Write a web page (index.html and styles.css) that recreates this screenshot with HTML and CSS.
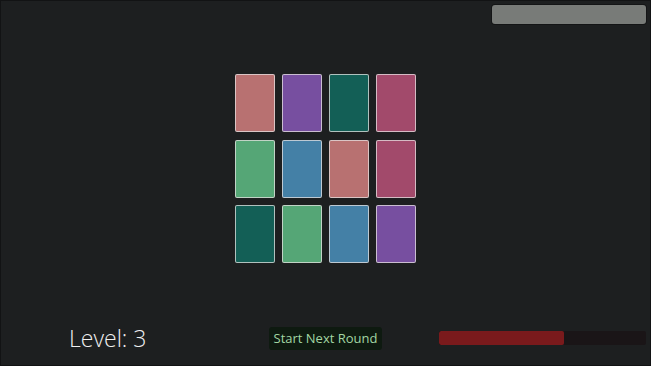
FILE: index.html
```html
<!DOCTYPE html>
<html lang="en">
<head>
    <meta charset="UTF-8">
    <title>Memory Cards</title>
    <link rel="stylesheet" href="styles.css">
</head>
<body>
    <div class="app">
        <div class="top-bar">
            <div class="status-box"></div>
        </div>

        <div class="board">
            <div class="card salmon"></div>
            <div class="card purple"></div>
            <div class="card teal"></div>
            <div class="card rose"></div>

            <div class="card green"></div>
            <div class="card blue"></div>
            <div class="card salmon"></div>
            <div class="card rose"></div>

            <div class="card teal"></div>
            <div class="card green"></div>
            <div class="card blue"></div>
            <div class="card purple"></div>
        </div>

        <div class="footer">
            <div class="level">Level: 3</div>
            <button class="next-btn">Start Next Round</button>
            <div class="timer">
                <div class="timer-fill" style="width: 60.5%"></div>
            </div>
        </div>
    </div>
</body>
</html>
```

FILE: styles.css
```css
html, body {
    margin: 0;
    padding: 0;
    height: 100%;
    background: #1d1f20;
    font-family: 'Open Sans', sans-serif;
    overflow: hidden;
}

.app {
    height: 100vh;
    box-sizing: border-box;
    display: flex;
    flex-direction: column;
    border: 1px solid #121314;
    padding: 4px 4px 15px 4px;
}

.top-bar {
    display: flex;
    justify-content: flex-end;
}

.status-box {
    width: 154px;
    height: 19px;
    background: #787b78;
    border-radius: 3px;
    box-shadow: 0 0 0 1px #141516;
}

.board {
    align-self: center;
    display: grid;
    grid-template-columns: repeat(4, 40px);
    grid-template-rows: repeat(3, 58px);
    column-gap: 7px;
    row-gap: 7.5px;
    margin-top: 50px;
}

.card {
    box-sizing: border-box;
    border: 1px solid rgba(230, 225, 225, 0.75);
    border-radius: 2px;
}

.salmon { background: #b87171; }
.purple { background: #774fa0; }
.teal { background: #135f56; }
.rose { background: #a24a6b; }
.green { background: #55a676; }
.blue { background: #4480a6; }

.footer {
    margin-top: auto;
    display: grid;
    grid-template-columns: 1fr auto 1fr;
    align-items: center;
}

.level {
    padding-left: 64px;
    color: #f0f0f0;
    font-size: 23px;
    font-weight: 300;
    line-height: 23px;
    margin-top: 1px;
}

.next-btn {
    width: 113px;
    height: 23px;
    padding: 0;
    border: none;
    border-radius: 3px;
    background: #0e1a10;
    color: #a3d6a3;
    font-family: 'Open Sans', sans-serif;
    font-size: 13px;
    cursor: pointer;
}

.timer {
    justify-self: end;
    width: 207px;
    height: 14px;
    background: #1a1517;
    border-radius: 2px;
    overflow: hidden;
}

.timer-fill {
    height: 100%;
    background: #7a1a1c;
    border-radius: 2px;
}
```
